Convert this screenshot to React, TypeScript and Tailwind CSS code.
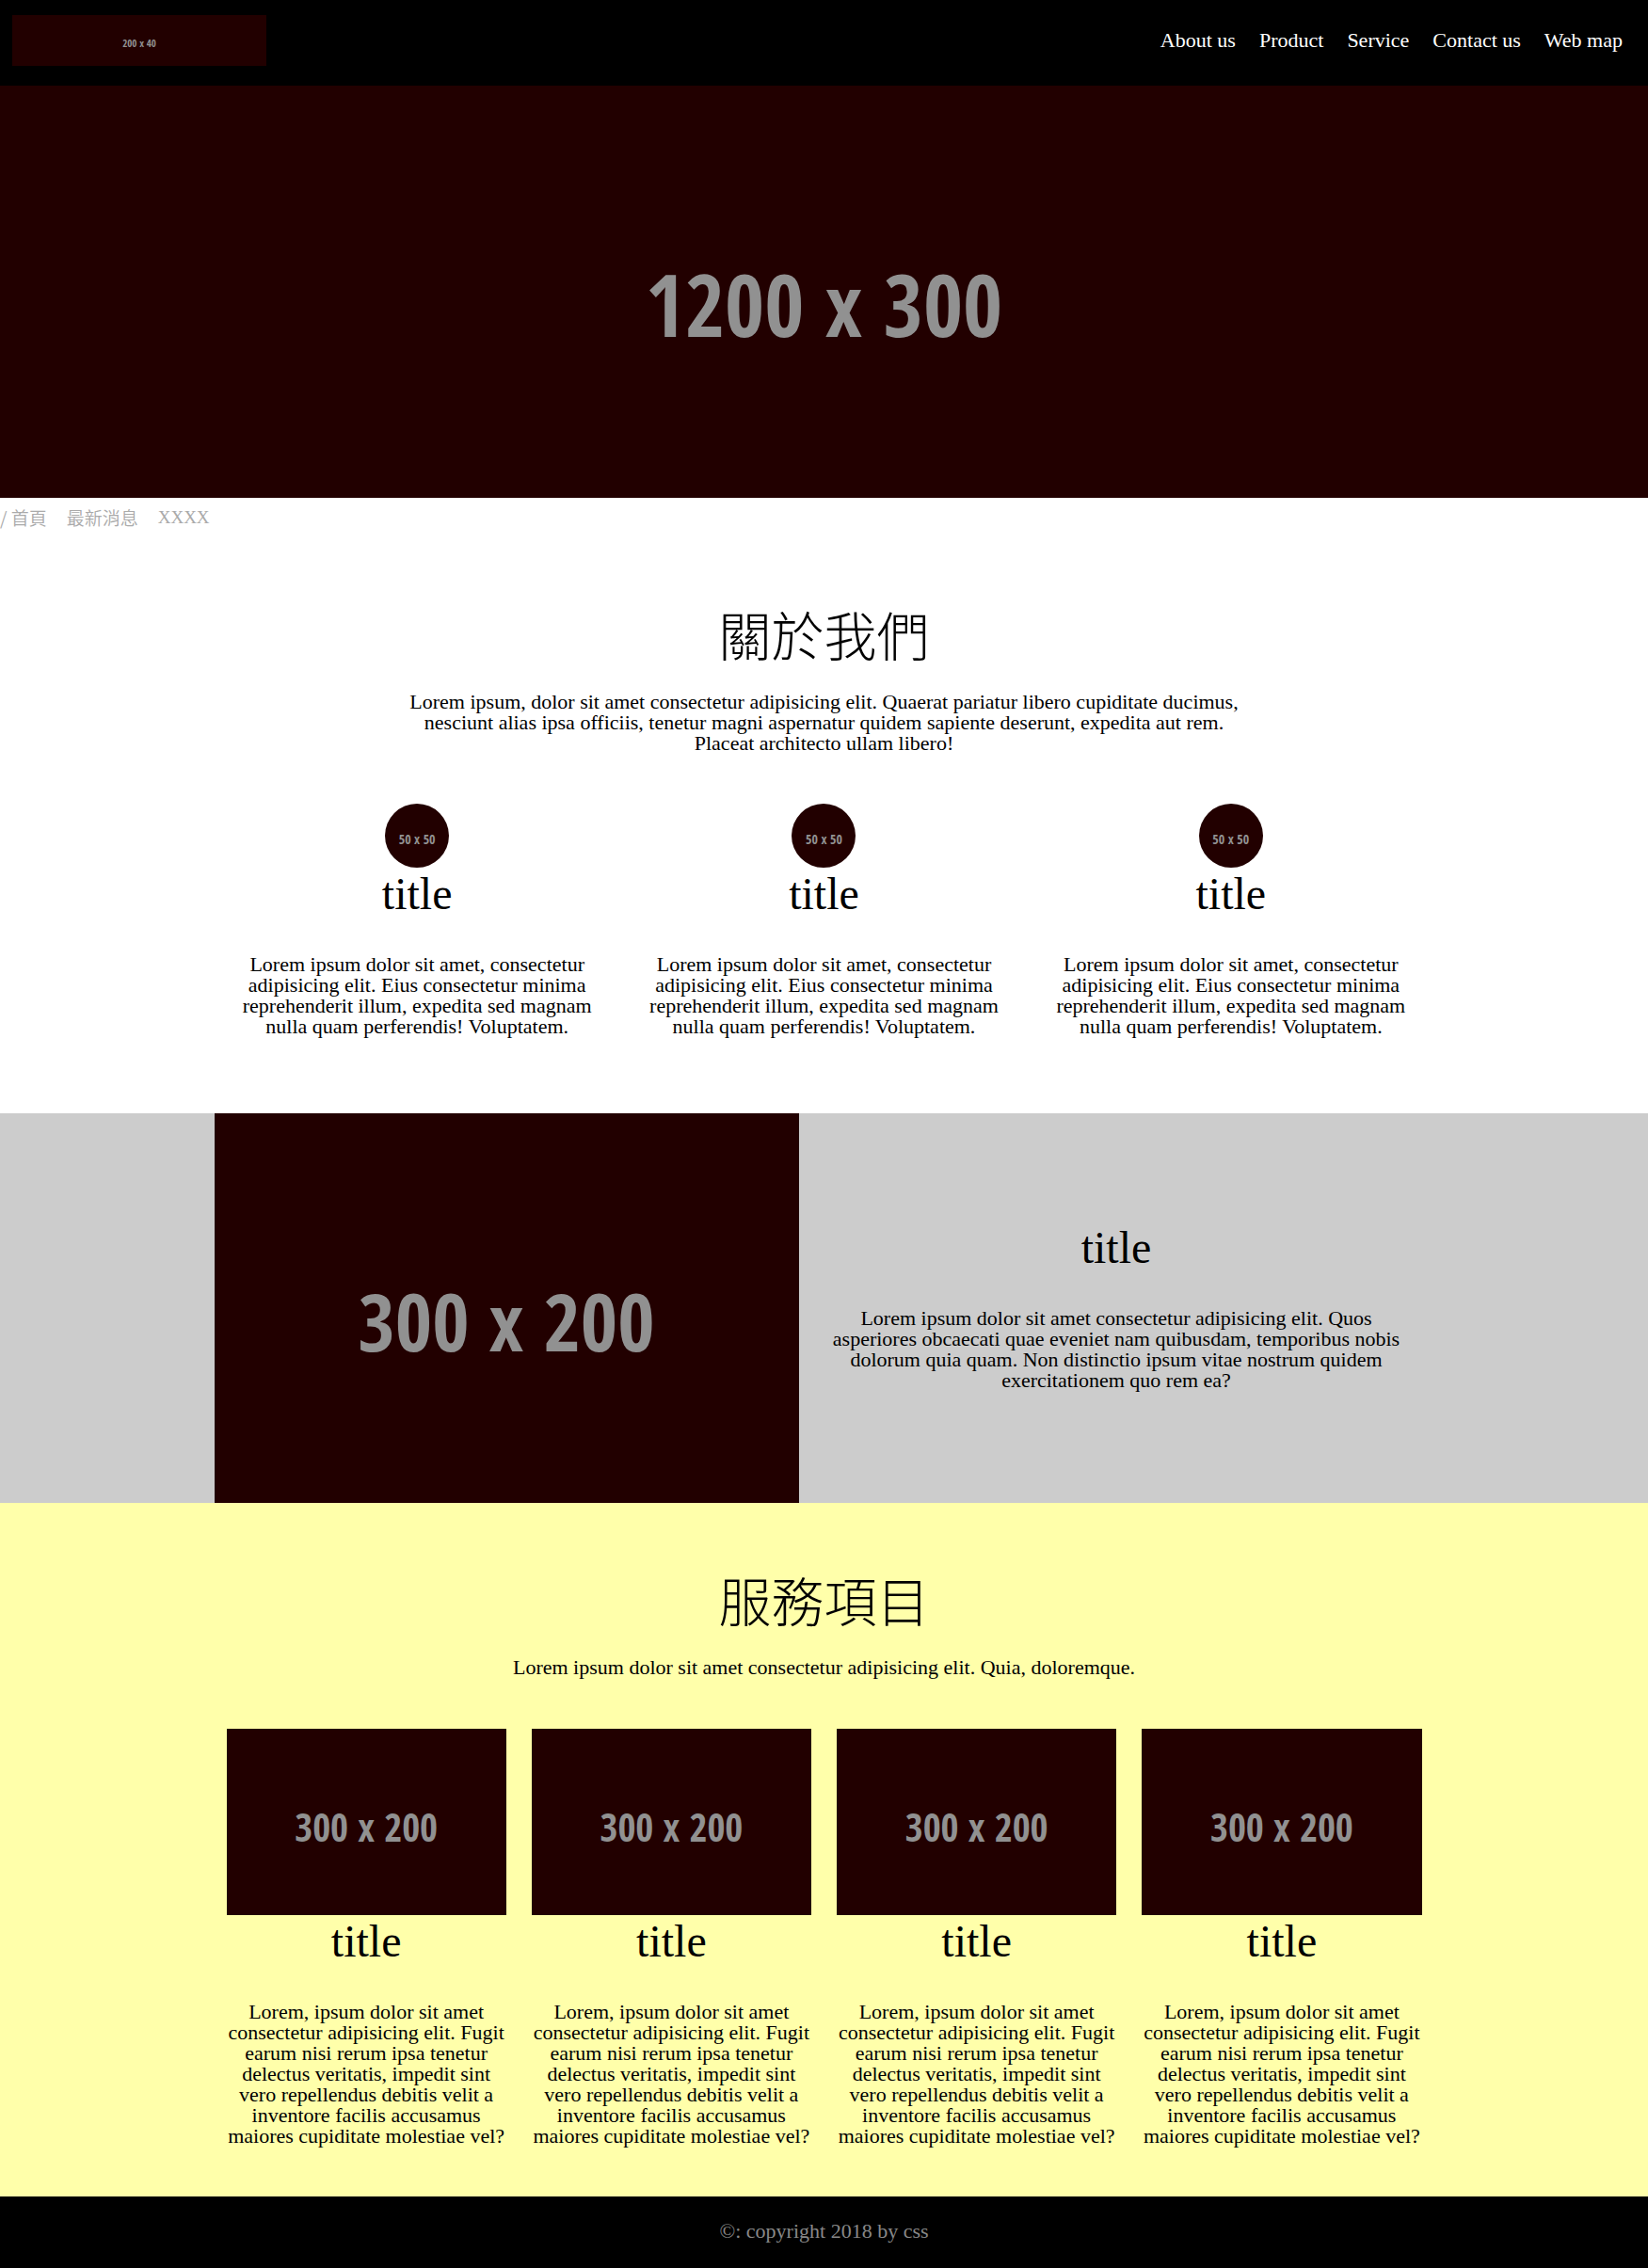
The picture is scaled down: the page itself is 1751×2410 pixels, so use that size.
const navItems = ["About us", "Product", "Service", "Contact us", "Web map"];

function Placeholder({ label, className }: { label: string; className: string }) {
  return (
    <div
      role="img"
      aria-label={label}
      className={`flex items-center justify-center bg-[#220000] font-['Open_Sans_Condensed','Noto_Sans_Condensed','Roboto_Condensed',sans-serif] leading-none font-extrabold whitespace-nowrap text-[#919191] ${className}`}
    >
      {label}
    </div>
  );
}

function SectionHeading({ title, text }: { title: string; text: string }) {
  return (
    <header className="mx-auto max-w-[900px]">
      <h2 className="font-['Noto_Sans_CJK_TC',sans-serif] text-[56px] leading-[56px] font-light">{title}</h2>
      <p className="mt-[34px]">{text}</p>
    </header>
  );
}

function Blurb({ text }: { text: string }) {
  return (
    <>
      <h3 className="text-5xl leading-[48px]">title</h3>
      <p className="mt-10">{text}</p>
    </>
  );
}

export default function App() {
  return (
    <div className="bg-white font-['Liberation_Serif',serif] text-[22px] leading-[22px] text-black">
      <header className="flex items-center justify-between bg-black pt-4 pr-[27px] pb-[21px] pl-[13px]">
        <a href="#">
          <Placeholder label="200 x 40" className="h-[54px] w-[270px] pt-1 text-[11px]" />
        </a>
        <nav className="flex gap-[25px] text-white">
          {navItems.map((item) => (
            <a key={item} href="#">
              {item}
            </a>
          ))}
        </nav>
      </header>

      <Placeholder label="1200 x 300" className="aspect-[4/1] w-full pt-7 text-[91px]" />

      <nav
        aria-label="Breadcrumb"
        className="flex gap-[21px] py-[10px] font-['Noto_Sans_CJK_TC',sans-serif] text-[19px] font-[350] text-[#aaaaaa]"
      >
        <a href="#">/ 首頁</a>
        <a href="#">最新消息</a>
        <a href="#" className="font-['Liberation_Serif',serif]">
          XXXX
        </a>
      </nav>

      <section className="pt-[74px] pb-[81px] text-center">
        <SectionHeading
          title="關於我們"
          text="Lorem ipsum, dolor sit amet consectetur adipisicing elit. Quaerat pariatur libero cupiditate ducimus, nesciunt alias ipsa officiis, tenetur magni aspernatur quidem sapiente deserunt, expedita aut rem. Placeat architecto ullam libero!"
        />
        <div className="mx-auto mt-[53px] grid max-w-[1296px] grid-cols-3 gap-[27px] px-[13px]">
          {[0, 1, 2].map((i) => (
            <article key={i} className="flex flex-col items-center">
              <Placeholder label="50 x 50" className="mb-1 size-[68px] rounded-full pt-2 text-[14px]" />
              <Blurb text="Lorem ipsum dolor sit amet, consectetur adipisicing elit. Eius consectetur minima reprehenderit illum, expedita sed magnam nulla quam perferendis! Voluptatem." />
            </article>
          ))}
        </div>
      </section>

      <section className="bg-[#cccccc] text-center">
        <div className="mx-auto flex max-w-[1296px] items-center">
          <Placeholder label="300 x 200" className="aspect-[3/2] w-[621px] pt-7 text-[85px]" />
          <div className="flex-1 px-[27px]">
            <Blurb text="Lorem ipsum dolor sit amet consectetur adipisicing elit. Quos asperiores obcaecati quae eveniet nam quibusdam, temporibus nobis dolorum quia quam. Non distinctio ipsum vitae nostrum quidem exercitationem quo rem ea?" />
          </div>
        </div>
      </section>

      <section className="bg-[#ffffaa] pt-[74px] pb-[53px] text-center">
        <SectionHeading
          title="服務項目"
          text="Lorem ipsum dolor sit amet consectetur adipisicing elit. Quia, doloremque."
        />
        <div className="mx-auto mt-[54px] grid max-w-[1296px] grid-cols-4 gap-[27px] px-[13px]">
          {[0, 1, 2, 3].map((i) => (
            <article key={i}>
              <Placeholder label="300 x 200" className="mb-1 aspect-[3/2] w-full pt-3 text-[41px]" />
              <Blurb text="Lorem, ipsum dolor sit amet consectetur adipisicing elit. Fugit earum nisi rerum ipsa tenetur delectus veritatis, impedit sint vero repellendus debitis velit a inventore facilis accusamus maiores cupiditate molestiae vel?" />
            </article>
          ))}
        </div>
      </section>

      <footer className="bg-black pt-[26px] pb-7 text-center text-[#888888]">©: copyright 2018 by css</footer>
    </div>
  );
}
